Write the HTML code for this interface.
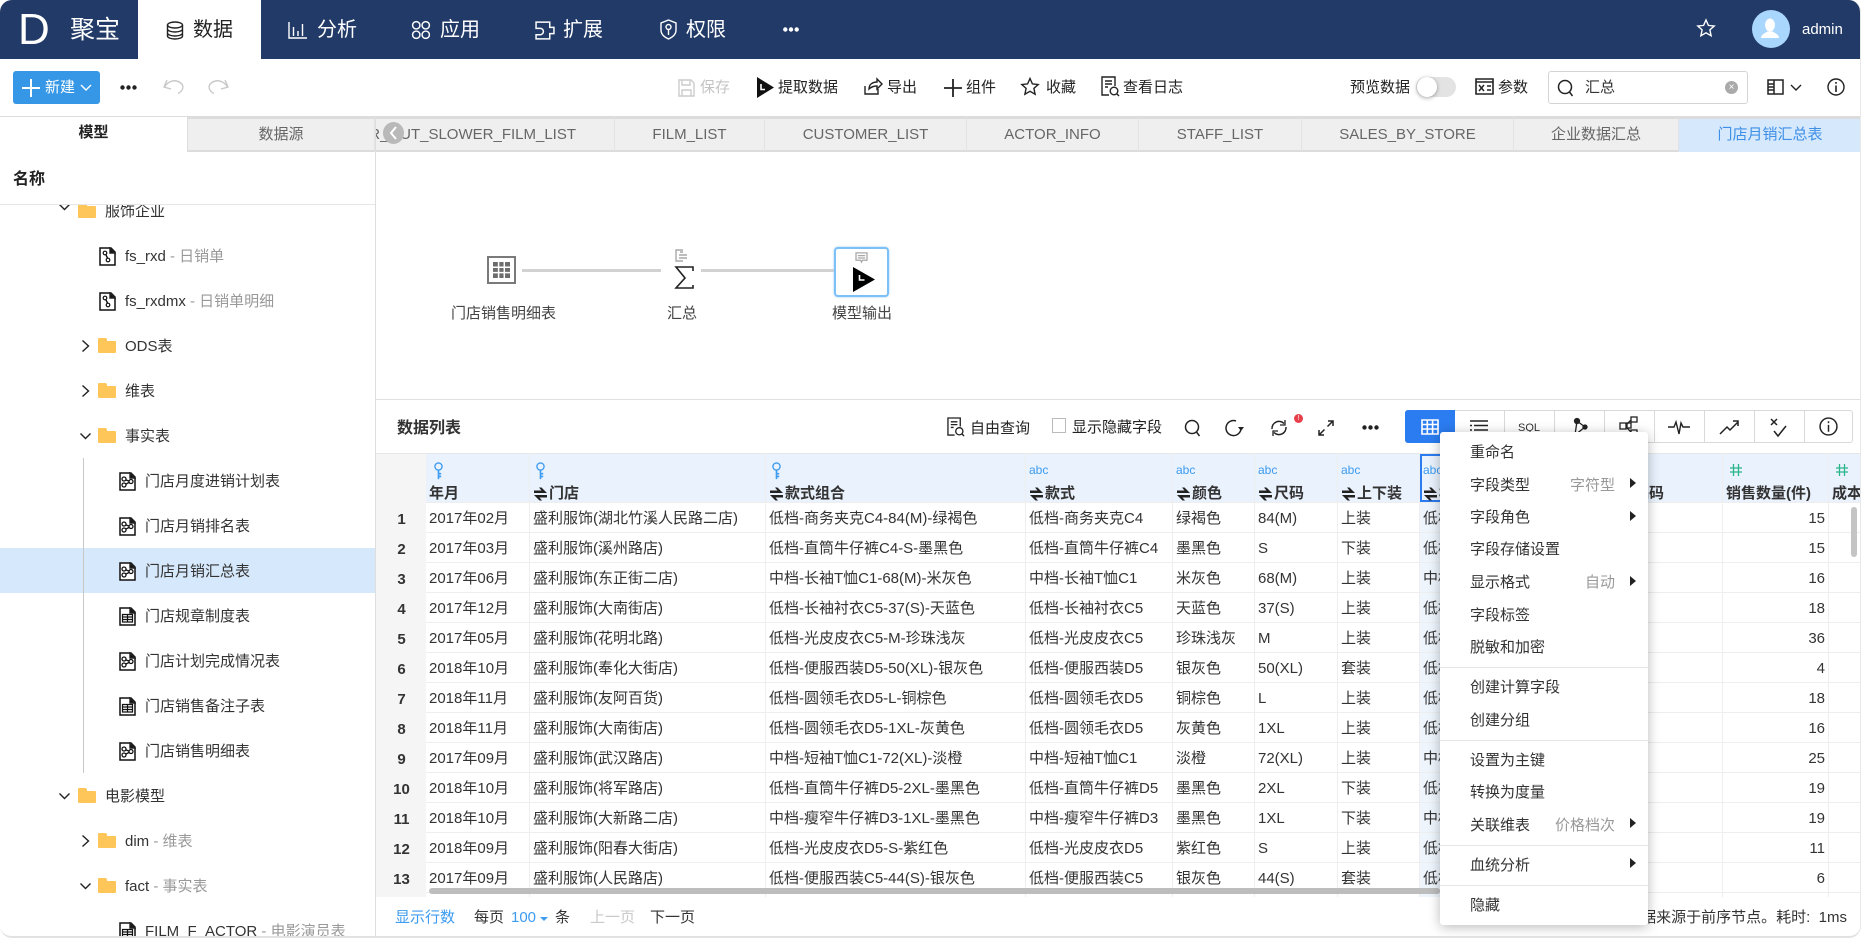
<!DOCTYPE html>
<html lang="zh"><head><meta charset="utf-8"><title>聚宝</title>
<style>
html,body{margin:0;padding:0;background:#fff}
*{box-sizing:border-box}
#root{position:relative;width:1864px;height:940px;overflow:hidden;background:#fff;font:15px/20px "Liberation Sans","Noto Sans CJK SC",sans-serif;color:#333}
#app{position:absolute;left:0;top:0;width:1861px;height:938px;border-radius:12px;overflow:hidden;background:#fff;border-bottom:2px solid #e2e2e2;border-right:1px solid #e8e8e8}
.t{position:absolute;white-space:nowrap;line-height:20px}
.a{position:absolute}
svg{display:block;overflow:visible}
svg.a{fill:none;stroke:#222;stroke-width:1.4}
#nav{position:absolute;left:0;top:0;width:1861px;height:59px;background:#223a67}
#nav .t{color:#fff;font-size:20px}
#nav svg.a{stroke:#fff}
#act{position:absolute;left:138px;top:0;width:123px;height:59px;background:#fff}
.tab{position:absolute;top:117px;height:35px;background:#efefef;border-top:2px solid #dcdcdc;border-bottom:2px solid #dcdcdc;border-right:1px solid #e3e3e3;color:#666;text-align:center;line-height:31px;white-space:nowrap;overflow:hidden}
#side{position:absolute;left:0;top:205px;width:375px;height:733px;overflow:hidden}
#side .t{color:#333;margin-top:1px}
#side i{font-style:normal;color:#999}
.fd{position:absolute;width:18px;height:12px;background:#fec558;border-radius:1px}
.fd:before{content:"";position:absolute;left:0;top:-3px;width:9px;height:4px;background:#fec558;border-radius:1px 2px 0 0}
table{position:absolute;left:0;top:0;width:1485px;table-layout:fixed;border-collapse:separate;border-spacing:0}
th,td{padding:0 3px;border-right:1px solid #eee;border-bottom:1px solid #eee;overflow:hidden;white-space:nowrap;font-weight:400;text-align:left;color:#333}
td{height:30px;line-height:27px;padding-top:2px}
th{height:50px;background:#e9f2fd;vertical-align:top;font-weight:700;border-top:1px solid #e6e6e6}
td:first-child,th:first-child{background:#f5f5f5;text-align:center;font-weight:700;border-right:0;border-bottom:0;padding:0 0 0 1px}
td:first-child{padding-top:2px}
th .u{height:32px;padding-top:6px;font-weight:400;color:#3d9bf0;font-size:12px;line-height:20px}
th .l{height:16px;line-height:16px;display:flex;align-items:center}
th .l svg{flex:none;margin-right:1px}
.sel{background:#eef5fd}
.n{text-align:right}
.tb{position:absolute;top:410px;width:50px;height:33px;border-right:1px solid #d9d9d9}
.m{position:absolute;left:1470px;margin-top:1px}
.v{position:absolute;right:245px;color:#999;white-space:nowrap;line-height:20px;margin-top:1px}
.ar{position:absolute;left:1630px;width:0;height:0;border-left:6px solid #222;border-top:5px solid transparent;border-bottom:5px solid transparent}
.sp{position:absolute;left:1440px;width:208px;height:1px;background:#e6e6e6}
</style></head><body>
<svg width="0" height="0" style="position:absolute"><defs>
<symbol id="flow" viewBox="0 0 17 19"><path d="M1 1h11l4 4v13H1z" fill="#fff" stroke="#111" stroke-width="1.5"/><path d="M11 1l5 5h-5z" fill="#111"/><circle cx="5" cy="7" r="2" fill="none" stroke="#111" stroke-width="1.3"/><circle cx="12" cy="9.5" r="2" fill="none" stroke="#111" stroke-width="1.3"/><circle cx="5" cy="13" r="2" fill="none" stroke="#111" stroke-width="1.3"/><path d="M7 8l3 1M7 12l3-1.5" stroke="#111" fill="none"/></symbol>
<symbol id="flow2" viewBox="0 0 17 19"><path d="M1 1h11l4 4v13H1z" fill="#fff" stroke="#111" stroke-width="1.5"/><path d="M11 1l5 5h-5z" fill="#111"/><circle cx="6" cy="6" r="1.8" fill="none" stroke="#111" stroke-width="1.2"/><circle cx="9" cy="13" r="1.8" fill="none" stroke="#111" stroke-width="1.2"/><path d="M7 8l1.5 3" stroke="#111" fill="none"/></symbol>
<symbol id="doc" viewBox="0 0 17 19"><path d="M1 1h11l4 4v13H1z" fill="#fff" stroke="#111" stroke-width="1.5"/><path d="M11 1l5 5h-5z" fill="#111"/><path d="M3.500 7.500h10v7.500h-10zM3.500 10h10M3.500 12.500h10M8.500 7.500v7.500" fill="none" stroke="#111" stroke-width="1.2"/></symbol>
<symbol id="sort" viewBox="0 0 15 14"><path d="M1 6h13L8.500 .5H6l2.500 3H1zM14 8H1l5.500 5.500H9l-2.500-3H14z" fill="#222"/></symbol>
<symbol id="key" viewBox="0 0 12 20"><circle cx="6" cy="5" r="4" fill="none" stroke="#3d9bf0" stroke-width="1.500"/><path d="M6 9v10M6 13h3M6 16h3" fill="none" stroke="#3d9bf0" stroke-width="1.800"/></symbol>
<symbol id="hash" viewBox="0 0 14 14"><path d="M4.500 1v12M9.500 1v12M1 5h12M1 9h12" fill="none" stroke="#2bb58a" stroke-width="1.300"/></symbol>
</defs></svg>
<div id="root"><div id="app">

<div id="nav">
<div class="t" style="left:18px;top:8px;font-size:44px;line-height:44px;font-weight:400">D</div>
<div class="t" style="left:70px;top:15px;font-size:25px;line-height:30px">聚宝</div>
<div id="act"></div>
<svg class="a" style="left:166px;top:21px;stroke:#222" width="18" height="19" viewBox="0 0 18 19"><ellipse cx="9" cy="4" rx="7.500" ry="3"/><path d="M1.500 4v11c0 1.700 3.400 3 7.500 3s7.500-1.300 7.500-3V4M1.500 8c0 1.700 3.400 3 7.500 3s7.500-1.300 7.500-3M1.500 12c0 1.700 3.400 3 7.500 3s7.500-1.300 7.500-3"/></svg>
<div class="t" style="left:193px;top:20px;color:#222">数据</div>
<svg class="a" style="left:288px;top:21px" width="19" height="18" viewBox="0 0 19 18"><path d="M1 1v16h18M5.500 6v9M10 10v5M14.500 3v12"/></svg>
<div class="t" style="left:317px;top:20px">分析</div>
<svg class="a" style="left:411px;top:20px" width="20" height="20" viewBox="0 0 19 19"><circle cx="5" cy="5" r="3.500"/><circle cx="14" cy="5" r="3.500"/><circle cx="5" cy="14" r="3.500"/><circle cx="14" cy="14" r="3.500"/></svg>
<div class="t" style="left:440px;top:20px">应用</div>
<svg class="a" style="left:535px;top:21px" width="20" height="19" viewBox="0 0 19 18"><path d="M1 1h13v5h4v6h-4v5H1v-4h4a3 3 0 0 0 0-6H1z"/></svg>
<div class="t" style="left:563px;top:20px">扩展</div>
<svg class="a" style="left:660px;top:19px" width="17" height="21" viewBox="0 0 17 21"><path d="M8.500 1l7.500 3v7c0 4-3 7-7.500 9C4 18 1 15 1 11V4z"/><circle cx="8.500" cy="8" r="2.500"/><path d="M8.500 10.500V16"/></svg>
<div class="t" style="left:686px;top:20px">权限</div>
<svg class="a" style="left:783px;top:27px;fill:#fff;stroke:none" width="16" height="5" viewBox="0 0 16 5"><circle cx="2.300" cy="2.500" r="2.200"/><circle cx="8" cy="2.500" r="2.200"/><circle cx="13.700" cy="2.500" r="2.200"/></svg>
<svg class="a" style="left:1697px;top:19px" width="18" height="18" viewBox="0 0 18 18"><path d="M9 1l2.400 5.400 5.800.6-4.300 3.900 1.200 5.800L9 13.800l-5.100 2.900 1.200-5.800L.8 7l5.800-.6z"/></svg>
<div class="a" style="left:1752px;top:10px;width:38px;height:38px;border-radius:50%;background:#a9d6fc"></div>
<svg class="a" style="left:1761px;top:18px;stroke:none;fill:#fff" width="18" height="22" viewBox="0 0 18 22"><ellipse cx="9" cy="7" rx="5" ry="6.500"/><path d="M0 20c0-4 5-5 6-6.500h6c1 1.500 6 2.500 6 6.500z"/></svg>
<div class="t" style="left:1802px;top:20px;font-size:15px">admin</div>
</div>

<!-- toolbar -->
<div class="a" style="left:13px;top:71px;width:87px;height:33px;background:#3597e6;border-radius:3px"></div>
<svg class="a" style="left:22px;top:79px;stroke:#fff;stroke-width:2" width="18" height="18" viewBox="0 0 18 18"><path d="M9 0v18M0 9h18"/></svg>
<div class="t" style="left:45px;top:78px;color:#fff;font-size:15px">新建</div>
<svg class="a" style="left:81px;top:85px;stroke:#fff" width="10" height="6" viewBox="0 0 10 6"><path d="M0 0l5 5 5-5"/></svg>
<svg class="a" style="left:120px;top:85px;fill:#222;stroke:none" width="17" height="5" viewBox="0 0 17 5"><circle cx="2.500" cy="2.500" r="2.200"/><circle cx="8.500" cy="2.500" r="2.200"/><circle cx="14.500" cy="2.500" r="2.200"/></svg>
<svg class="a" style="left:163px;top:80px;stroke:#c9c9c9" width="21" height="14" viewBox="0 0 21 14"><path d="M4 0L1 7l7 2M1.500 7C5 1 12-1 17 2.500s3 8.500-2 11"/></svg>
<svg class="a" style="left:208px;top:80px;stroke:#c9c9c9" width="21" height="14" viewBox="0 0 21 14"><path d="M17 0l3 7-7 2M19.500 7C16 1 9-1 4 2.500s-3 8.500 2 11"/></svg>
<svg class="a" style="left:678px;top:79px;stroke:#ccc" width="17" height="18" viewBox="0 0 17 18"><path d="M1 1h12l3 3v13H1zM4 1v5h8V1M4 17v-6h9v6"/></svg>
<div class="t" style="left:700px;top:78px;color:#c4c4c4">保存</div>
<svg class="a" style="left:757px;top:77px;stroke:none;fill:#111" width="17" height="21" viewBox="0 0 17 21"><path d="M0 0l17 10.500L0 21z"/><path d="M4 7v5.500h4" stroke="#fff" stroke-width="1.600" fill="none"/></svg>
<div class="t" style="left:778px;top:78px;color:#222">提取数据</div>
<svg class="a" style="left:864px;top:78px" width="18" height="17" viewBox="0 0 18 17"><path d="M1 8v8h13v-5M5 11c0-5 4-7 8-7V1l5 5-5 5V8c-3 0-6 1-8 3z"/></svg>
<div class="t" style="left:887px;top:78px;color:#222">导出</div>
<svg class="a" style="left:944px;top:79px;stroke-width:1.800" width="18" height="18" viewBox="0 0 18 18"><path d="M9 0v18M0 9h18"/></svg>
<div class="t" style="left:966px;top:78px;color:#222">组件</div>
<svg class="a" style="left:1021px;top:77px" width="18" height="19" viewBox="0 0 18 18"><path d="M9 1l2.400 5.400 5.800.6-4.300 3.900 1.200 5.800L9 13.800l-5.100 2.900 1.200-5.800L.8 7l5.800-.6z"/></svg>
<div class="t" style="left:1046px;top:78px;color:#222">收藏</div>
<svg class="a" style="left:1101px;top:76px" width="19" height="21" viewBox="0 0 19 21"><path d="M8 19H1V1h13v9M4 5h7M4 8h7M4 11h3"/><circle cx="13" cy="15" r="3.800"/><path d="M16 18l2 2"/></svg>
<div class="t" style="left:1123px;top:78px;color:#222">查看日志</div>
<div class="t" style="left:1350px;top:78px;color:#222">预览数据</div>
<div class="a" style="left:1416px;top:77px;width:40px;height:20px;border-radius:10px;background:#e3e3e3"></div>
<div class="a" style="left:1417px;top:77px;width:20px;height:20px;border-radius:50%;background:#fff;box-shadow:0 1px 4px rgba(0,0,0,.35)"></div>
<svg class="a" style="left:1475px;top:78px;stroke-width:1.600" width="19" height="17" viewBox="0 0 19 17"><path d="M1 1h17v15H1zM1 4h17"/><path d="M4 7l5 6M9 7l-5 6M12 8h4M12 12h4" stroke-width="1.500"/></svg>
<div class="t" style="left:1498px;top:78px;color:#222">参数</div>
<div class="a" style="left:1548px;top:71px;width:200px;height:33px;border:1px solid #d4d4d4;border-radius:3px"></div>
<svg class="a" style="left:1557px;top:79px;stroke-width:1.500" width="17" height="18" viewBox="0 0 17 18"><circle cx="8" cy="8" r="6.500"/><path d="M12.500 13l3 4"/></svg>
<div class="t" style="left:1585px;top:78px;color:#333">汇总</div>
<div class="a" style="left:1725px;top:81px;width:13px;height:13px;border-radius:50%;background:#aaa;color:#fff;font-size:10px;line-height:13px;text-align:center">×</div>
<svg class="a" style="left:1767px;top:79px;stroke-width:1.500" width="17" height="16" viewBox="0 0 17 16"><path d="M1 1h15v14H1zM7 1v14M1 5h6M1 8h6M1 11h6"/></svg>
<svg class="a" style="left:1791px;top:85px" width="10" height="6" viewBox="0 0 10 6"><path d="M0 0l5 5 5-5"/></svg>
<svg class="a" style="left:1827px;top:78px" width="18" height="18" viewBox="0 0 18 18"><circle cx="9" cy="9" r="8"/><path d="M9 7.500V14M9 4v1.800" stroke-width="1.600"/></svg>

<!-- left tabs -->
<div class="a" style="left:0;top:116px;width:1861px;height:1px;background:#dcdcdc"></div>
<div class="t" style="left:0;top:123px;width:187px;text-align:center;font-weight:700;color:#222;font-size:15px">模型</div>
<div class="tab" style="left:187px;width:188px;border-left:1px solid #ddd">数据源</div>
<div class="a" style="left:375px;top:117px;width:1px;height:821px;background:#dedede"></div>

<!-- main tabs -->
<div class="tab" style="left:376px;width:239px"><span class="a" style="right:38px;top:0">R_OUT_SLOWER_FILM_LIST</span></div>
<div class="tab" style="left:615px;width:150px">FILM_LIST</div>
<div class="tab" style="left:765px;width:202px">CUSTOMER_LIST</div>
<div class="tab" style="left:967px;width:172px">ACTOR_INFO</div>
<div class="tab" style="left:1139px;width:163px">STAFF_LIST</div>
<div class="tab" style="left:1302px;width:212px">SALES_BY_STORE</div>
<div class="tab" style="left:1514px;width:165px">企业数据汇总</div>
<div class="tab" style="left:1679px;width:182px;background:#d6e8fb;color:#3d8fe8;border-right:0;border-bottom-color:#d6e8fb">门店月销汇总表</div>
<div class="a" style="left:383px;top:122px;width:21px;height:22px;border-radius:50%;background:#b9b9b9"></div>
<svg class="a" style="left:390px;top:127px;stroke:#fff;stroke-width:2" width="7" height="12" viewBox="0 0 7 12"><path d="M6 0L1 6l5 6"/></svg>

<!-- sidebar -->
<div class="t" style="left:13px;top:170px;font-weight:700;font-size:16px;color:#222">名称</div>
<div class="a" style="left:0;top:204px;width:375px;height:1px;background:#e6e6e6"></div>
<div id="side">
<svg class="a" style="left:59px;top:-1px" width="11" height="7" viewBox="0 0 11 7"><path d="M.5.500l5 5 5-5"/></svg><div class="fd" style="left:78px;top:1px"></div><div class="t" style="left:105px;top:-4px">服饰企业</div>
<svg class="a" style="left:99px;top:42px;width:17px;height:19px"><use href="#flow2"/></svg><div class="t" style="left:125px;top:41px">fs_rxd <i>- 日销单</i></div>
<svg class="a" style="left:99px;top:87px;width:17px;height:19px"><use href="#flow2"/></svg><div class="t" style="left:125px;top:86px">fs_rxdmx <i>- 日销单明细</i></div>
<svg class="a" style="left:82px;top:135px" width="7" height="12" viewBox="0 0 7 12"><path d="M.5.500l6 5.500-6 5.500"/></svg><div class="fd" style="left:98px;top:136px"></div><div class="t" style="left:125px;top:131px">ODS表</div>
<svg class="a" style="left:82px;top:180px" width="7" height="12" viewBox="0 0 7 12"><path d="M.5.500l6 5.500-6 5.500"/></svg><div class="fd" style="left:98px;top:181px"></div><div class="t" style="left:125px;top:176px">维表</div>
<svg class="a" style="left:80px;top:228px" width="11" height="7" viewBox="0 0 11 7"><path d="M.5.500l5 5 5-5"/></svg><div class="fd" style="left:98px;top:226px"></div><div class="t" style="left:125px;top:221px">事实表</div>
<div class="a" style="left:0;top:343px;width:375px;height:45px;background:#d6e8fb"></div>
<div class="a" style="left:83px;top:253px;width:1px;height:315px;background:#c8c8c8"></div>
<svg class="a" style="left:119px;top:267px;width:17px;height:19px"><use href="#flow"/></svg><div class="t" style="left:145px;top:266px">门店月度进销计划表</div>
<svg class="a" style="left:119px;top:312px;width:17px;height:19px"><use href="#flow"/></svg><div class="t" style="left:145px;top:311px">门店月销排名表</div>
<svg class="a" style="left:119px;top:357px;width:17px;height:19px"><use href="#flow"/></svg><div class="t" style="left:145px;top:356px">门店月销汇总表</div>
<svg class="a" style="left:119px;top:402px;width:17px;height:19px"><use href="#doc"/></svg><div class="t" style="left:145px;top:401px">门店规章制度表</div>
<svg class="a" style="left:119px;top:447px;width:17px;height:19px"><use href="#flow"/></svg><div class="t" style="left:145px;top:446px">门店计划完成情况表</div>
<svg class="a" style="left:119px;top:492px;width:17px;height:19px"><use href="#doc"/></svg><div class="t" style="left:145px;top:491px">门店销售备注子表</div>
<svg class="a" style="left:119px;top:537px;width:17px;height:19px"><use href="#flow"/></svg><div class="t" style="left:145px;top:536px">门店销售明细表</div>
<svg class="a" style="left:59px;top:588px" width="11" height="7" viewBox="0 0 11 7"><path d="M.5.500l5 5 5-5"/></svg><div class="fd" style="left:78px;top:586px"></div><div class="t" style="left:105px;top:581px">电影模型</div>
<svg class="a" style="left:82px;top:630px" width="7" height="12" viewBox="0 0 7 12"><path d="M.5.500l6 5.500-6 5.500"/></svg><div class="fd" style="left:98px;top:631px"></div><div class="t" style="left:125px;top:626px">dim <i>- 维表</i></div>
<svg class="a" style="left:80px;top:678px" width="11" height="7" viewBox="0 0 11 7"><path d="M.5.500l5 5 5-5"/></svg><div class="fd" style="left:98px;top:676px"></div><div class="t" style="left:125px;top:671px">fact <i>- 事实表</i></div>
<svg class="a" style="left:119px;top:717px;width:17px;height:19px"><use href="#doc"/></svg><div class="t" style="left:145px;top:716px">FILM_F_ACTOR <i>- 电影演员表</i></div>
</div>

<!-- flow -->
<svg class="a" style="left:487px;top:256px;stroke:none" width="29" height="28" viewBox="0 0 29 28"><rect width="29" height="28" fill="#7a7a7a"/><rect x="2" y="2" width="25" height="24" fill="#fff"/><rect x="6" y="6" width="17" height="16" fill="#6c6c6c"/><path d="M6 11.300h17M6 16.600h17M11.600 6v16M17.300 6v16" stroke="#fff" stroke-width="1.500"/></svg>
<div class="a" style="left:522px;top:269px;width:139px;height:3px;background:#d2d2d2"></div>
<svg class="a" style="left:675px;top:249px;stroke:#a8a8a8" width="13" height="13" viewBox="0 0 13 13"><path d="M8 1H1v11h7M4 6h8M4 9h8M5 3h3"/></svg>
<svg class="a" style="left:674px;top:266px;stroke:#222;stroke-width:1.600" width="20" height="24" viewBox="0 0 20 24"><path d="M19 5V1H2l9 11-9 10h17v-3"/></svg>
<div class="a" style="left:701px;top:269px;width:134px;height:3px;background:#d2d2d2"></div>
<div class="a" style="left:834px;top:247px;width:55px;height:50px;border:2px solid #7cc0f8;border-radius:4px;background:#fff;box-shadow:0 0 2px #9ccdf7"></div>
<svg class="a" style="left:855px;top:252px;stroke:#a8a8a8" width="13" height="11" viewBox="0 0 14 12"><path d="M1 1h12v8H8l-1 2-1-2H1zM3 4h8M3 6.500h8"/></svg>
<svg class="a" style="left:853px;top:267px;stroke:none;fill:#000" width="22" height="25" viewBox="0 0 22 25"><path d="M0 0l22 12.500L0 25z"/><path d="M6.500 8v5h5" stroke="#fff" stroke-width="1.600" fill="none"/></svg>
<div class="t" style="left:451px;top:304px;color:#444">门店销售明细表</div>
<div class="t" style="left:667px;top:304px;color:#444">汇总</div>
<div class="t" style="left:832px;top:304px;color:#444">模型输出</div>

<!-- list header -->
<div class="a" style="left:376px;top:399px;width:1485px;height:1px;background:#e0e0e0"></div>
<div class="t" style="left:397px;top:419px;font-size:16px;font-weight:700;color:#333">数据列表</div>
<svg class="a" style="left:947px;top:417px" width="18" height="20" viewBox="0 0 19 21"><path d="M8 19H1V1h13v9M4 5h7M4 8h7M4 11h3"/><circle cx="13" cy="15" r="3.800"/><path d="M16 18l2 2"/></svg>
<div class="t" style="left:970px;top:419px;color:#222">自由查询</div>
<div class="a" style="left:1052px;top:418px;width:14px;height:15px;border:1px solid #bbb"></div>
<div class="t" style="left:1072px;top:418px;color:#222">显示隐藏字段</div>
<svg class="a" style="left:1184px;top:419px;stroke-width:1.500" width="17" height="18" viewBox="0 0 17 18"><circle cx="8" cy="8" r="6.500"/><path d="M12.500 13l3 4"/></svg>
<svg class="a" style="left:1225px;top:419px;stroke-width:1.500" width="18" height="18" viewBox="0 0 18 18"><path d="M11 2a7.500 7.500 0 1 0 5 7"/><path d="M13 8h6l-3 4z" fill="#222" stroke="none"/></svg>
<svg class="a" style="left:1270px;top:419px;stroke-width:1.500" width="18" height="18" viewBox="0 0 18 18"><path d="M2 10a7 7 0 0 1 12-5.500M16 8a7 7 0 0 1-12 5.500"/><path d="M15 1v5h-5M3 17v-5h5" stroke-width="1.300"/></svg>
<div class="a" style="left:1294px;top:414px;width:9px;height:9px;border-radius:50%;background:#e8404a;color:#fff;font-size:7px;line-height:9px;text-align:center">!</div>
<svg class="a" style="left:1318px;top:420px;stroke-width:1.500" width="16" height="16" viewBox="0 0 16 16"><path d="M10 1h5v5M15 1L9.500 6.500M6 15H1v-5M1 15l5.500-5.500"/></svg>
<svg class="a" style="left:1362px;top:425px;fill:#222;stroke:none" width="17" height="5" viewBox="0 0 17 5"><circle cx="2.500" cy="2.500" r="2.200"/><circle cx="8.500" cy="2.500" r="2.200"/><circle cx="14.500" cy="2.500" r="2.200"/></svg>
<div class="a" style="left:1405px;top:410px;width:448px;height:33px;border:1px solid #d9d9d9;border-radius:3px"></div>
<div class="a" style="left:1405px;top:410px;width:50px;height:33px;background:#2b7cf0;border-radius:3px 0 0 3px"></div>
<div class="tb" style="left:1455px"></div><div class="tb" style="left:1505px"></div><div class="tb" style="left:1555px"></div><div class="tb" style="left:1605px"></div><div class="tb" style="left:1655px"></div><div class="tb" style="left:1705px"></div><div class="tb" style="left:1755px"></div>
<svg class="a" style="left:1421px;top:419px;stroke:#fff;stroke-width:1.600" width="18" height="16" viewBox="0 0 18 16"><path d="M1 1h16v14H1zM1 5.500h16M1 10h16M6.300 1v14M11.600 1v14"/></svg>
<svg class="a" style="left:1470px;top:420px;stroke-width:1.600" width="18" height="15" viewBox="0 0 18 15"><path d="M0 1h18M4 5.500h14M4 10h14M0 14h18M0 5.500h2M0 10h2"/></svg>
<div class="t" style="left:1518px;top:418px;font-size:11px;color:#333">SQL</div>
<svg class="a" style="left:1569px;top:418px;stroke-width:1.300" width="20" height="20" viewBox="0 0 20 20"><circle cx="8" cy="3" r="2.500" fill="#222"/><circle cx="6" cy="17" r="2.500" fill="#222"/><circle cx="16" cy="9" r="2" fill="#222"/><path d="M8 3l8 6-10 8 2-14z"/></svg>
<svg class="a" style="left:1619px;top:416px;stroke-width:1.300" width="20" height="20" viewBox="0 0 20 20"><rect x="12" y="1" width="6" height="5"/><rect x="1" y="7" width="6" height="6"/><rect x="12" y="14" width="6" height="5"/><rect x="8" y="7" width="4" height="5"/><path d="M7 9l5-5M7 11l5 5"/></svg>
<svg class="a" style="left:1668px;top:419px" width="22" height="16" viewBox="0 0 22 16"><path d="M0 8h6l2-5 3 12 2-11 2 4h7"/></svg>
<svg class="a" style="left:1719px;top:419px;stroke-width:1.500" width="20" height="16" viewBox="0 0 20 16"><path d="M1 15l7-7 3 3 8-8M14 2h5v5"/></svg>
<svg class="a" style="left:1770px;top:418px;stroke-width:1.500" width="18" height="20" viewBox="0 0 18 20"><path d="M1 1l6 6M7 1L1 7M4 13l4 5L16 8"/></svg>
<svg class="a" style="left:1819px;top:417px;stroke-width:1.400" width="19" height="19" viewBox="0 0 18 18"><circle cx="9" cy="9" r="8"/><path d="M9 7.500V14M9 4v1.800"/></svg>

<!-- table -->
<div class="a" style="left:376px;top:453px;width:1485px;height:444px;overflow:hidden">
<table>
<colgroup><col style="width:50px"><col style="width:104px"><col style="width:236px"><col style="width:260px"><col style="width:147px"><col style="width:82px"><col style="width:83px"><col style="width:82px"><col style="width:120px"><col style="width:183px"><col style="width:106px"><col style="width:32px"></colgroup>
<tr><th></th>
<th><div class="u"><svg style="margin-left:4px;margin-top:2px" width="11" height="18"><use href="#key"/></svg></div><div class="l">年月</div></th>
<th><div class="u"><svg style="margin-left:2px;margin-top:2px" width="11" height="18"><use href="#key"/></svg></div><div class="l"><svg width="15" height="14"><use href="#sort"/></svg>门店</div></th>
<th><div class="u"><svg style="margin-left:2px;margin-top:2px" width="11" height="18"><use href="#key"/></svg></div><div class="l"><svg width="15" height="14"><use href="#sort"/></svg>款式组合</div></th>
<th><div class="u">abc</div><div class="l"><svg width="15" height="14"><use href="#sort"/></svg>款式</div></th>
<th><div class="u">abc</div><div class="l"><svg width="15" height="14"><use href="#sort"/></svg>颜色</div></th>
<th><div class="u">abc</div><div class="l"><svg width="15" height="14"><use href="#sort"/></svg>尺码</div></th>
<th><div class="u">abc</div><div class="l"><svg width="15" height="14"><use href="#sort"/></svg>上下装</div></th>
<th style="box-shadow:inset 2px 2px 0 #2b7cf0,inset 0 -2px 0 #2b7cf0"><div class="u">abc</div><div class="l"><svg width="15" height="14"><use href="#sort"/></svg>档次</div></th>
<th><div class="u"></div><div class="l" style="padding-left:61px">产品编码</div></th>
<th><div class="u"><svg style="margin-left:3px;margin-top:3px" width="14" height="14"><use href="#hash"/></svg></div><div class="l">销售数量(件)</div></th>
<th><div class="u"><svg style="margin-left:3px;margin-top:3px" width="14" height="14"><use href="#hash"/></svg></div><div class="l">成本</div></th></tr>
<tr><td>1</td><td>2017年02月</td><td>盛利服饰(湖北竹溪人民路二店)</td><td>低档-商务夹克C4-84(M)-绿褐色</td><td>低档-商务夹克C4</td><td>绿褐色</td><td>84(M)</td><td>上装</td><td class="sel">低档</td><td></td><td class="n">15</td><td></td></tr>
<tr><td>2</td><td>2017年03月</td><td>盛利服饰(溪州路店)</td><td>低档-直筒牛仔裤C4-S-墨黑色</td><td>低档-直筒牛仔裤C4</td><td>墨黑色</td><td>S</td><td>下装</td><td class="sel">低档</td><td></td><td class="n">15</td><td></td></tr>
<tr><td>3</td><td>2017年06月</td><td>盛利服饰(东正街二店)</td><td>中档-长袖T恤C1-68(M)-米灰色</td><td>中档-长袖T恤C1</td><td>米灰色</td><td>68(M)</td><td>上装</td><td class="sel">中档</td><td></td><td class="n">16</td><td></td></tr>
<tr><td>4</td><td>2017年12月</td><td>盛利服饰(大南街店)</td><td>低档-长袖衬衣C5-37(S)-天蓝色</td><td>低档-长袖衬衣C5</td><td>天蓝色</td><td>37(S)</td><td>上装</td><td class="sel">低档</td><td></td><td class="n">18</td><td></td></tr>
<tr><td>5</td><td>2017年05月</td><td>盛利服饰(花明北路)</td><td>低档-光皮皮衣C5-M-珍珠浅灰</td><td>低档-光皮皮衣C5</td><td>珍珠浅灰</td><td>M</td><td>上装</td><td class="sel">低档</td><td></td><td class="n">36</td><td></td></tr>
<tr><td>6</td><td>2018年10月</td><td>盛利服饰(奉化大街店)</td><td>低档-便服西装D5-50(XL)-银灰色</td><td>低档-便服西装D5</td><td>银灰色</td><td>50(XL)</td><td>套装</td><td class="sel">低档</td><td></td><td class="n">4</td><td></td></tr>
<tr><td>7</td><td>2018年11月</td><td>盛利服饰(友阿百货)</td><td>低档-圆领毛衣D5-L-铜棕色</td><td>低档-圆领毛衣D5</td><td>铜棕色</td><td>L</td><td>上装</td><td class="sel">低档</td><td></td><td class="n">18</td><td></td></tr>
<tr><td>8</td><td>2018年11月</td><td>盛利服饰(大南街店)</td><td>低档-圆领毛衣D5-1XL-灰黄色</td><td>低档-圆领毛衣D5</td><td>灰黄色</td><td>1XL</td><td>上装</td><td class="sel">低档</td><td></td><td class="n">16</td><td></td></tr>
<tr><td>9</td><td>2017年09月</td><td>盛利服饰(武汉路店)</td><td>中档-短袖T恤C1-72(XL)-淡橙</td><td>中档-短袖T恤C1</td><td>淡橙</td><td>72(XL)</td><td>上装</td><td class="sel">中档</td><td></td><td class="n">25</td><td></td></tr>
<tr><td>10</td><td>2018年10月</td><td>盛利服饰(将军路店)</td><td>低档-直筒牛仔裤D5-2XL-墨黑色</td><td>低档-直筒牛仔裤D5</td><td>墨黑色</td><td>2XL</td><td>下装</td><td class="sel">低档</td><td></td><td class="n">19</td><td></td></tr>
<tr><td>11</td><td>2018年10月</td><td>盛利服饰(大新路二店)</td><td>中档-瘦窄牛仔裤D3-1XL-墨黑色</td><td>中档-瘦窄牛仔裤D3</td><td>墨黑色</td><td>1XL</td><td>下装</td><td class="sel">中档</td><td></td><td class="n">19</td><td></td></tr>
<tr><td>12</td><td>2018年09月</td><td>盛利服饰(阳春大街店)</td><td>低档-光皮皮衣D5-S-紫红色</td><td>低档-光皮皮衣D5</td><td>紫红色</td><td>S</td><td>上装</td><td class="sel">低档</td><td></td><td class="n">11</td><td></td></tr>
<tr><td>13</td><td>2017年09月</td><td>盛利服饰(人民路店)</td><td>低档-便服西装C5-44(S)-银灰色</td><td>低档-便服西装C5</td><td>银灰色</td><td>44(S)</td><td>套装</td><td class="sel">低档</td><td></td><td class="n">6</td><td></td></tr>
<tr><td></td><td></td><td></td><td></td><td></td><td></td><td></td><td></td><td class="sel"></td><td></td><td></td><td></td></tr>
</table>
</div>
<div class="a" style="left:429px;top:888px;width:1011px;height:6px;border-radius:3px;background:#bdbdbd"></div>
<div class="a" style="left:1851px;top:507px;width:6px;height:50px;border-radius:3px;background:#c4c4c4"></div>

<!-- footer -->
<div class="t" style="left:395px;top:908px;color:#3d9bf0">显示行数</div>
<div class="t" style="left:474px;top:908px;color:#333">每页</div>
<div class="t" style="left:511px;top:908px;color:#3d9bf0">100</div>
<div class="a" style="left:540px;top:917px;border-left:4px solid transparent;border-right:4px solid transparent;border-top:4px solid #3d9bf0"></div>
<div class="t" style="left:555px;top:908px;color:#333">条</div>
<div class="t" style="left:590px;top:908px;color:#c9c9c9">上一页</div>
<div class="t" style="left:650px;top:908px;color:#333">下一页</div>
<div class="t" style="right:13px;top:908px;color:#333">数据来源于前序节点。耗时:&nbsp;&nbsp;1ms</div>

<!-- context menu -->
<div class="a" style="left:1440px;top:432px;width:208px;height:493px;background:#fff;border-radius:3px;box-shadow:0 2px 12px rgba(0,0,0,.28)"></div>
<div class="t m" style="top:442px">重命名</div>
<div class="t m" style="top:475px">字段类型</div><div class="v" style="top:475px">字符型</div><div class="ar" style="top:478px"></div>
<div class="t m" style="top:507px">字段角色</div><div class="ar" style="top:511px"></div>
<div class="t m" style="top:539px">字段存储设置</div>
<div class="t m" style="top:572px">显示格式</div><div class="v" style="top:572px">自动</div><div class="ar" style="top:576px"></div>
<div class="t m" style="top:605px">字段标签</div>
<div class="t m" style="top:637px">脱敏和加密</div>
<div class="sp" style="top:667px"></div>
<div class="t m" style="top:677px">创建计算字段</div>
<div class="t m" style="top:710px">创建分组</div>
<div class="sp" style="top:740px"></div>
<div class="t m" style="top:750px">设置为主键</div>
<div class="t m" style="top:782px">转换为度量</div>
<div class="t m" style="top:815px">关联维表</div><div class="v" style="top:815px">价格档次</div><div class="ar" style="top:818px"></div>
<div class="sp" style="top:845px"></div>
<div class="t m" style="top:855px">血统分析</div><div class="ar" style="top:858px"></div>
<div class="sp" style="top:885px"></div>
<div class="t m" style="top:895px">隐藏</div>

</div></div>
</body></html>
